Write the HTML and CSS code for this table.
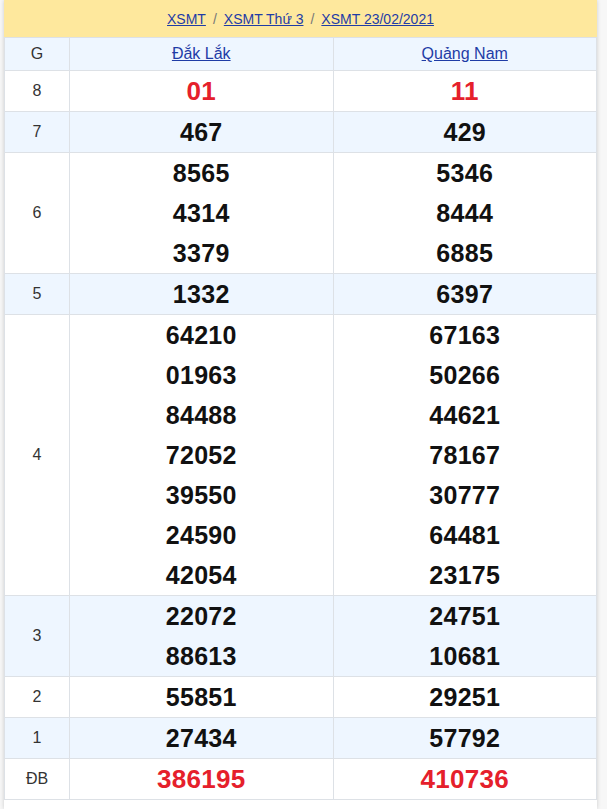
FILE: index.html
```html
<!DOCTYPE html>
<html lang="vi">
<head>
<meta charset="utf-8">
<title>XSMT 23/02/2021</title>
<link rel="stylesheet" href="styles.css">
</head>
<body>
<div class="page">
  <div class="crumbs">
    <a href="#">XSMT</a><span class="sep">/</span><a href="#">XSMT Thứ 3</a><span class="sep">/</span><a href="#">XSMT 23/02/2021</a>
  </div>
  <table class="results">
    <colgroup><col class="c-label"><col class="c-prov"><col class="c-prov"></colgroup>
    <thead>
      <tr class="head"><th>G</th><th><a href="#">Đắk Lắk</a></th><th><a href="#">Quảng Nam</a></th></tr>
    </thead>
    <tbody>
      <tr><td class="lbl">8</td><td><div class="num red">01</div></td><td><div class="num red">11</div></td></tr>
      <tr class="alt"><td class="lbl">7</td><td><div class="num">467</div></td><td><div class="num">429</div></td></tr>
      <tr><td class="lbl">6</td><td><div class="num">8565</div><div class="num">4314</div><div class="num">3379</div></td><td><div class="num">5346</div><div class="num">8444</div><div class="num">6885</div></td></tr>
      <tr class="alt"><td class="lbl">5</td><td><div class="num">1332</div></td><td><div class="num">6397</div></td></tr>
      <tr><td class="lbl">4</td><td><div class="num">64210</div><div class="num">01963</div><div class="num">84488</div><div class="num">72052</div><div class="num">39550</div><div class="num">24590</div><div class="num">42054</div></td><td><div class="num">67163</div><div class="num">50266</div><div class="num">44621</div><div class="num">78167</div><div class="num">30777</div><div class="num">64481</div><div class="num">23175</div></td></tr>
      <tr class="alt"><td class="lbl">3</td><td><div class="num">22072</div><div class="num">88613</div></td><td><div class="num">24751</div><div class="num">10681</div></td></tr>
      <tr><td class="lbl">2</td><td><div class="num">55851</div></td><td><div class="num">29251</div></td></tr>
      <tr class="alt"><td class="lbl">1</td><td><div class="num">27434</div></td><td><div class="num">57792</div></td></tr>
      <tr><td class="lbl">ĐB</td><td><div class="num red">386195</div></td><td><div class="num red">410736</div></td></tr>
    </tbody>
  </table>
</div>
</body>
</html>
```
FILE: styles.css
```css
html, body {
  margin: 0;
  padding: 0;
}
body {
  background: #f7f7f7;
  font-family: "Liberation Sans", Arial, sans-serif;
  color: #333;
}
.page {
  margin-left: 4px;
  width: 593px;
  min-height: 809px;
  background: #fff;
  box-shadow: 0 0 4px rgba(0, 0, 0, 0.18);
}
.crumbs {
  height: 37px;
  background: #fee89d;
  display: flex;
  align-items: center;
  justify-content: center;
  font-size: 14px;
}
.crumbs a {
  color: #1f3ca6;
}
.crumbs .sep {
  color: #777;
  margin: 0 7px;
}
.results {
  width: 593px;
  border-collapse: collapse;
  table-layout: fixed;
}
.c-label { width: 65px; }
.results th,
.results td {
  border: 1px solid #dde1e6;
  padding: 0;
  text-align: center;
  vertical-align: middle;
}
.head th {
  height: 32px;
  background: #eef6ff;
  font-weight: normal;
  font-size: 16px;
  color: #333;
}
.head a { color: #1f3ca6; }
.alt td { background: #eef6ff; }
.lbl {
  font-size: 16px;
  color: #333;
}
.num {
  font-size: 25px;
  font-weight: bold;
  line-height: 40px;
  color: #111;
  letter-spacing: 0.3px;
}
.num.red {
  color: #e5202b;
  font-size: 26px;
}
```
